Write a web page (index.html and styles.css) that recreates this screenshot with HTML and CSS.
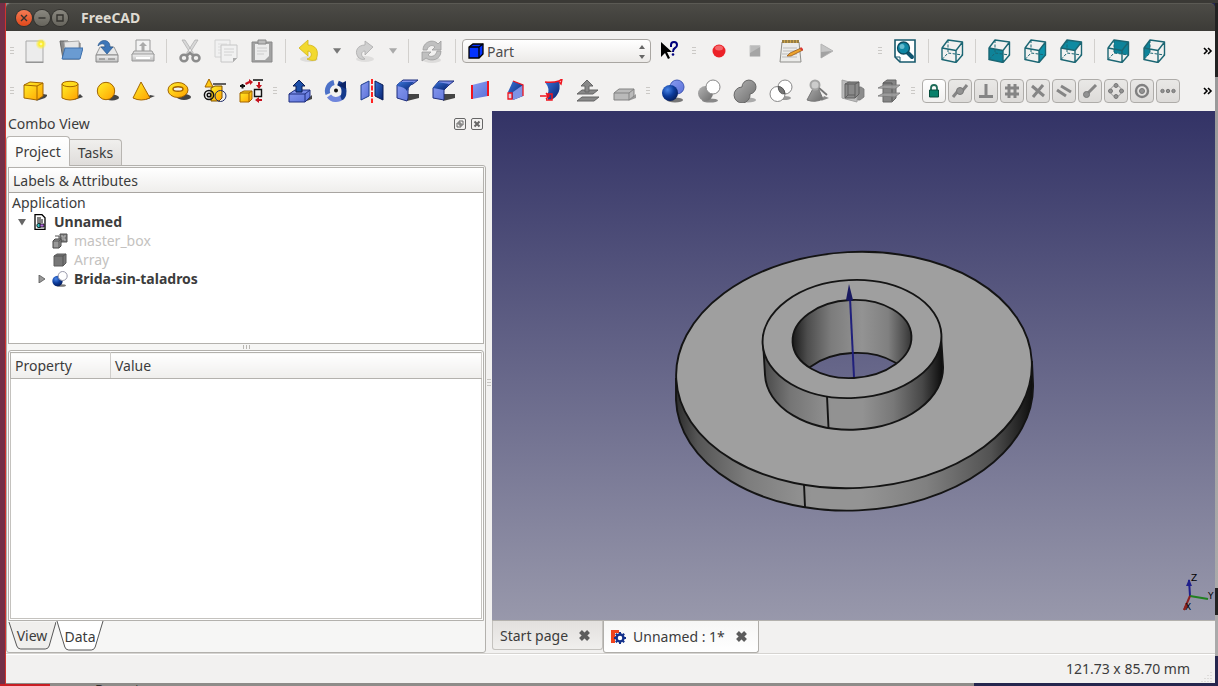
FILE: index.html
```
<!DOCTYPE html>
<html lang="en">
<head>
<meta charset="utf-8">
<title>FreeCAD</title>
<link rel="stylesheet" href="styles.css">
</head>
<body>
<svg class="defs" aria-hidden="true">
  <defs>
    <linearGradient id="gold" x1="0" y1="0" x2="1" y2="1"><stop offset="0" stop-color="#fff02a"/><stop offset="1" stop-color="#ffa000"/></linearGradient>
    <linearGradient id="blue" x1="0" y1="0" x2="1" y2="1"><stop offset="0" stop-color="#8a9cf0"/><stop offset="1" stop-color="#5a70d8"/></linearGradient>
    <linearGradient id="navy" x1="0" y1="0" x2="1" y2="1"><stop offset="0" stop-color="#3a74d8"/><stop offset="1" stop-color="#06206e"/></linearGradient>
    <linearGradient id="grey" x1="0" y1="0" x2="1" y2="1"><stop offset="0" stop-color="#b4b4b4"/><stop offset="1" stop-color="#6c6c6c"/></linearGradient>
    <linearGradient id="pale" x1="0" y1="0" x2="0" y2="1"><stop offset="0" stop-color="#f4f4f4"/><stop offset="1" stop-color="#bdbdbd"/></linearGradient>
    <radialGradient id="ball" cx=".35" cy=".3" r=".8"><stop offset="0" stop-color="#4a86e8"/><stop offset=".5" stop-color="#0c3c9c"/><stop offset="1" stop-color="#041850"/></radialGradient>
    <radialGradient id="shine"><stop offset="0" stop-color="#fffde0"/><stop offset=".35" stop-color="#ffee20"/><stop offset="1" stop-color="#ffee20" stop-opacity="0"/></radialGradient>
  </defs>
  <symbol id="wire" viewBox="0 0 24 24">
    <g fill="none" stroke="#1b6673" stroke-width="1.4" stroke-linejoin="round">
      <path d="M2 9L16 11.5V23.5L2 20.5ZM2 9L8 1L22.5 3L16 11.5M22.5 3V16L16 23.5"/>
      <path d="M8 1V14M2 20.5L8 14L22.5 16" stroke-width="1" stroke-dasharray="3 1.5"/>
    </g>
  </symbol>
</svg>

<header class="titlebar">
  <button class="wm wm-close" aria-label="Close"><svg viewBox="0 0 16 16"><path d="M5 5l6 6M11 5l-6 6"/></svg></button>
  <button class="wm" aria-label="Minimize"><svg viewBox="0 0 16 16"><path d="M4.500 8h7"/></svg></button>
  <button class="wm" aria-label="Maximize"><svg viewBox="0 0 16 16"><path d="M5 5h6v6H5z"/></svg></button>
  <h1>FreeCAD</h1>
</header>

<nav class="toolbar" aria-label="File and view">
  <span class="grip"></span>
  <button class="tool" aria-label="New"><svg viewBox="0 0 24 24"><path d="M3 2h17v21H3z" fill="#ececec" stroke="#a9a9a9"/><path d="M2.500 23.300h18" stroke="#888"/><circle cx="18" cy="5" r="5.500" fill="url(#shine)"/></svg></button>
  <button class="tool" aria-label="Open"><svg viewBox="0 0 24 24"><path d="M1 2h8l1 2h11v5L20 20H4z" fill="#8a8a8a" stroke="#666"/><path d="M5 3l15-1v8H6z" fill="#e6e6e6" stroke="#aaa"/><path d="M6 9h18l-3 11H3z" fill="#6a9bd2" stroke="#3e70ac"/></svg></button>
  <button class="tool" aria-label="Save"><svg viewBox="0 0 24 24"><path d="M5 8h14l4 8H1z" fill="#e8e8e8" stroke="#999"/><path d="M1 16h22v7H1z" fill="url(#pale)" stroke="#888"/><path d="M13 20h7M4 20h6" stroke="#777"/><path d="M3 7C4 0 15-1 15 8h3l-6 7-6-7h4C10 4 6 4 3 7z" fill="#3d76b8" stroke="#28568c" stroke-width=".7"/></svg></button>
  <button class="tool" aria-label="Print"><svg viewBox="0 0 24 24"><path d="M5 1h14v12H5z" fill="#f3f3f3" stroke="#999"/><path d="M12 3l4 4h-2.500v5h-3V7H8z" fill="#aaa"/><path d="M3 12h18l2 4H1z" fill="#ddd" stroke="#999"/><path d="M1 15h22v7H1z" fill="url(#pale)" stroke="#999"/><path d="M5 19h14" stroke="#fff" stroke-width="2"/></svg></button>
  <span class="sep"></span>
  <button class="tool" aria-label="Cut"><svg viewBox="0 0 24 24"><path d="M4 1l3 0 9 14-2 2zM20 1h-3L8 15l2 2z" fill="#d8d8d8" stroke="#aaa" stroke-width=".7"/><g fill="none" stroke="#8c8c8c" stroke-width="2.500"><ellipse cx="6" cy="19" rx="3.500" ry="3.200"/><ellipse cx="18" cy="19" rx="3.500" ry="3.200"/><path d="M8 17l4-3 4 3"/></g></svg></button>
  <button class="tool" aria-label="Copy"><svg viewBox="0 0 24 24"><path d="M1 1h15v17H1z" fill="#f1f1f1" stroke="#d2d2d2"/><path d="M4 5h9M4 8h9M4 11h9M4 14h9" stroke="#ddd"/><path d="M7 6h16v13l-4 4H7z" fill="#f1f1f1" stroke="#c6c6c6"/><path d="M10 10h10M10 13h10M10 16h8" stroke="#d2d2d2"/><path d="M19 23v-4h4z" fill="#aaa"/></svg></button>
  <button class="tool" aria-label="Paste"><svg viewBox="0 0 24 24"><path d="M2 3h20v20H2z" fill="#a2a2a2" stroke="#8a8a8a"/><path d="M5 5h14v12l-4 4H5z" fill="#ececec"/><path d="M8 1h8v4H8z" fill="#bbb" stroke="#888"/><path d="M7 9h10M7 12h10M7 15h7" stroke="#ccc"/></svg></button>
  <span class="sep"></span>
  <button class="tool" aria-label="Undo"><svg viewBox="0 0 24 24"><ellipse cx="12" cy="20" rx="9" ry="3" fill="#dedddc"/><path d="M2 9l9-8v5c7 0 12 5 8 15-4 1-7 0-9-1 5-1 6-7 1-8v5z" fill="#f2d92e" stroke="#d0b416" stroke-width=".8"/></svg></button>
  <button class="drop" aria-label="Undo history"><svg viewBox="0 0 10 6"><path d="M0 0h9L4.500 6z" fill="#777"/></svg></button>
  <button class="tool" aria-label="Redo"><svg viewBox="0 0 24 24"><ellipse cx="12" cy="20" rx="9" ry="3" fill="#dfdedd"/><path d="M20 8l-8-6v4C5 6 1 12 5 18c2 2 4 3 7 2-5-3-4-8 0-8v4z" fill="#cfcfcf" stroke="#ababab" stroke-width=".8"/></svg></button>
  <button class="drop" aria-label="Redo history"><svg viewBox="0 0 10 6"><path d="M0 0h9L4.500 6z" fill="#aaa"/></svg></button>
  <span class="sep"></span>
  <button class="tool" aria-label="Refresh"><svg viewBox="0 0 24 24"><ellipse cx="12" cy="21" rx="9" ry="3" fill="#dddcdb"/><path d="M3 11C3 3 13-1 18 5l3-3v9h-9l3-3c-3-3-7-1-8 3zM21 12c0 9-10 11-15 7l-4 3v-9h9l-3 3c3 3 8 1 9-4z" fill="#c0c0c0" stroke="#9d9d9d" stroke-width=".8"/></svg></button>
  <span class="sep"></span>
  <span class="workbench">
    <svg class="wb-icon" viewBox="0 0 16 16"><path d="M1 4l4-3h10v10l-4 4H1z" fill="#0433ff" stroke="#000" stroke-width="1.300"/><path d="M1 4h10v11M11 4l4-3" fill="none" stroke="#000" stroke-width="1.300"/></svg>
    <select aria-label="Workbench"><option>Part</option></select>
    <svg class="wb-arrows" viewBox="0 0 8 14"><path d="M1 4l3-4 3 4zM1 10h6l-3 4z" fill="#666"/></svg>
  </span>
  <button class="tool" aria-label="What's this"><svg viewBox="0 0 24 24"><path d="M3 3v15l4-4 3 6 2-1-3-6h5z" fill="#000"/><path d="M13 8V6q0-3 3-3t3 3q0 2-2 3t-2 4" fill="none" stroke="#00007c" stroke-width="2"/><circle cx="15" cy="15.500" r="1.300" fill="#00007c"/></svg></button>
  <span class="grip"></span>
  <button class="tool" aria-label="Record macro"><svg viewBox="0 0 24 24"><circle cx="12" cy="12" r="6.500" fill="#ec2228"/><ellipse cx="12" cy="9" rx="4" ry="2.500" fill="#f4666a"/></svg></button>
  <button class="tool" aria-label="Stop macro"><svg viewBox="0 0 24 24"><path d="M7 6.500h10v11H7z" fill="#bbb" stroke="#c9c9c9"/><path d="M7 14l10-6v9H7z" fill="#a5a5a5"/></svg></button>
  <button class="tool" aria-label="Macros"><svg viewBox="0 0 24 24"><path d="M3 3h17l2 20H1z" fill="#ececea" stroke="#8f8f8b"/><path d="M3 1h17v3H3z" fill="#c9a24a"/><path d="M4 1v3M7 1v3M10 1v3M13 1v3M16 1v3M19 1v3" stroke="#66583a"/><path d="M4 9h14M4 12h14M3 15h15M3 18h15" stroke="#bbb"/><path d="M8 17l3-3 11-5 2 2-12 6z" fill="#eda32c" stroke="#8a4e14" stroke-width=".7"/><path d="M22 8l2 2-1 2-2-2z" fill="#d33"/></svg></button>
  <button class="tool" aria-label="Run macro"><svg viewBox="0 0 24 24"><path d="M6 5l12 7-12 7z" fill="#c6c6c6" stroke="#b4b4b4"/><path d="M6 13l11-1-11 7z" fill="#a2a2a2"/></svg></button>
  <span class="stretch"></span>
  <span class="grip"></span>
  <button class="tool" aria-label="Fit all"><svg viewBox="0 0 24 24"><path d="M2 1h20v22H7l-5-5z" fill="#fff" stroke="#17596c" stroke-width="1.600"/><path d="M2 18h5v5" fill="none" stroke="#17596c"/><path d="M14 13l5 5" stroke="#0e5570" stroke-width="4" stroke-linecap="round"/><circle cx="10.500" cy="9" r="6" fill="#0f87a5" stroke="#0c4c60" stroke-width="1.300"/><circle cx="9" cy="7.500" r="2.500" fill="#65bccf"/></svg></button>
  <span class="sep"></span>
  <button class="tool" aria-label="Axonometric"><svg viewBox="0 0 24 24"><use href="#wire"/></svg></button>
  <span class="sep"></span>
  <button class="tool" aria-label="Front"><svg viewBox="0 0 24 24"><path d="M2 9l14 2.500v12l-14-3z" fill="#0e8399"/><use href="#wire"/></svg></button>
  <button class="tool" aria-label="Right"><svg viewBox="0 0 24 24"><path d="M16 11.500L22.500 3v13L16 23.500z" fill="#0e93ab"/><use href="#wire"/></svg></button>
  <button class="tool" aria-label="Top"><svg viewBox="0 0 24 24"><path d="M2 9l6-8 14.500 2L16 11.500z" fill="#0e8ba2"/><use href="#wire"/></svg></button>
  <span class="sep"></span>
  <button class="tool" aria-label="Rear"><svg viewBox="0 0 24 24"><path d="M8 1l14.500 2v13L8 14z" fill="#0e839a"/><use href="#wire"/></svg></button>
  <button class="tool" aria-label="Left"><svg viewBox="0 0 24 24"><path d="M2 9l6-8v13l-6 6.500z" fill="#0e839a"/><use href="#wire"/></svg></button>
  <button class="more" aria-label="More tools"><svg viewBox="0 0 10 8"><path d="M1 1l3 3-3 3M5 1l3 3-3 3"/></svg></button>
</nav>

<nav class="toolbar" aria-label="Part tools">
  <span class="grip"></span>
  <button class="tool" aria-label="Box"><svg viewBox="0 0 24 24"><path d="M13 22l9-3 3-3-5-1z" fill="#444"/><path d="M1 6l6-3 13 1v13l-6 4-13-2z" fill="url(#gold)" stroke="#a36400"/><path d="M1 6l13 1 6-3M14 7v14" fill="none" stroke="#a36400"/></svg></button>
  <button class="tool" aria-label="Cylinder"><svg viewBox="0 0 24 24"><path d="M15 21l9-3-3-3z" fill="#444"/><path d="M3 5v14q8 4 16 0V5" fill="url(#gold)" stroke="#a36400"/><ellipse cx="11" cy="5" rx="8" ry="2.700" fill="#ffdb1c" stroke="#a36400"/></svg></button>
  <button class="tool" aria-label="Sphere"><svg viewBox="0 0 24 24"><ellipse cx="17" cy="18.500" rx="7" ry="3" fill="#444"/><circle cx="11" cy="12" r="8.700" fill="url(#gold)" stroke="#a36400"/></svg></button>
  <button class="tool" aria-label="Cone"><svg viewBox="0 0 24 24"><path d="M14 21l10-4-5-1z" fill="#444"/><path d="M10 3l9 16q-9 4-17 0z" fill="url(#gold)" stroke="#a36400"/></svg></button>
  <button class="tool" aria-label="Torus"><svg viewBox="0 0 24 24"><ellipse cx="17" cy="18" rx="7" ry="3" fill="#444"/><ellipse cx="11" cy="11" rx="10" ry="7.500" fill="url(#gold)" stroke="#a36400"/><ellipse cx="11" cy="10" rx="5" ry="2.300" fill="#f2f1f0" stroke="#a36400" stroke-width="1.500"/></svg></button>
  <button class="tool" aria-label="Create primitives"><svg viewBox="0 0 24 24"><path d="M6 0l4 8H2z" fill="#ffc814" stroke="#a36400"/><path d="M10 5h13" stroke="#111" stroke-width="1.300"/><path d="M8 9l4-2h7v12l-3 3H8z" fill="url(#gold)" stroke="#7d5200"/><g fill="none" stroke="#111" stroke-width="1.500"><circle cx="6" cy="16" r="4.600"/><circle cx="6" cy="16" r="1.800"/></g><circle cx="17.500" cy="17" r="5.500" fill="none" stroke="#1e2b66"/></svg></button>
  <button class="tool" aria-label="Shape builder"><svg viewBox="0 0 24 24"><path d="M1 14l4-2h8v8l-3 3H1z" fill="url(#gold)" stroke="#a36400"/><path d="M1 14h9v9M10 14l3-2" fill="none" stroke="#a36400"/><path d="M14 1h10M15.500 10.500h7v7h-7z" fill="none" stroke="#111" stroke-width="1.400"/><path d="M1 7h5M3.500 5v4.500" stroke="#111" stroke-width="2"/><path d="M6 4l4-2V0l4 3-3 3V4L7 6zM19 3h2v3h2l-3 4-3-4h2zM23 20h-3v-2l-4 3 4 3v-2l3 0z" fill="#c5121f"/></svg></button>
  <span class="grip"></span>
  <button class="tool" aria-label="Extrude"><svg viewBox="0 0 24 24"><path d="M16 23l8-3v-4z" fill="#444"/><path d="M1 15l6-4h15v7l-5 5H1z" fill="url(#blue)" stroke="#1f2f7e"/><path d="M1 15h16v8M17 15l5-4" fill="none" stroke="#1f2f7e"/><path d="M11 1l6 6h-3v6H8V7H5z" fill="#1d4fa8" stroke="#0b1d55"/></svg></button>
  <button class="tool" aria-label="Revolve"><svg viewBox="0 0 24 24"><g fill="none" stroke-width="5"><path d="M10 3.500A8.500 8.500 0 0 0 4 15" stroke="#4d72c8"/><path d="M5 17a8.500 8.500 0 0 0 13 1" stroke="#7086dc"/><path d="M14 4q6 2 6 8t-3 7" stroke="#153a8c"/></g><path d="M14 6l8-4v8z" fill="#0b2468"/><circle cx="12" cy="11.500" r="2" fill="#111"/></svg></button>
  <button class="tool" aria-label="Mirror"><svg viewBox="0 0 24 24"><path d="M1 6l8-4v15l-8 4z" fill="url(#blue)" stroke="#1f3f8e"/><path d="M15 2l8 4v15l-8-4z" fill="url(#navy)" stroke="#0b1d55"/><path d="M12 0v24" stroke="#f22" stroke-width="2" stroke-dasharray="5 1.500"/></svg></button>
  <button class="tool" aria-label="Fillet"><svg viewBox="0 0 24 24"><path d="M11 22l12-3v-4H12z" fill="#444"/><path d="M1 6l6-5h15l-5 4q-5 1-5 7v7l-1 3-10-3z" fill="url(#blue)" stroke="#1f2f7e"/><path d="M1 6l3-3h14l-4 4q-2 1-3 5-2-4-10-5z" fill="url(#navy)"/></svg></button>
  <button class="tool" aria-label="Chamfer"><svg viewBox="0 0 24 24"><path d="M11 22l12-3v-4H12z" fill="#444"/><path d="M1 9l6-7h15l-5 4-5 5v10l-11-2z" fill="url(#blue)" stroke="#1f2f7e"/><path d="M1 9l5-6 11 2-5 6z" fill="url(#navy)"/></svg></button>
  <button class="tool" aria-label="Ruled surface"><svg viewBox="0 0 24 24"><path d="M4 6l16-4v15L4 20z" fill="url(#blue)"/><path d="M4 6v14M20 2v15" stroke="#f0141e" stroke-width="2"/></svg></button>
  <button class="tool" aria-label="Loft"><svg viewBox="0 0 24 24"><path d="M4 13L9 2l10 4v11l-10 4z" fill="url(#navy)"/><path d="M9 13l10-7v11l-10 4z" fill="#7f92e4"/><path d="M9 2l10 4v11" fill="none" stroke="#e81420" stroke-width="1.300"/><path d="M4 14h4v6H4z" fill="#dcd" stroke="#f0141e" stroke-width="1.300"/></svg></button>
  <button class="tool" aria-label="Sweep"><svg viewBox="0 0 24 24"><path d="M5 3q8 1 14-1 2 9-2 14-3 5-9 5l-1-5Q11 11 5 3z" fill="url(#navy)"/><path d="M5 3q8 1 14-1l3-2-1 5-2-2M6 15h6v6H6M0 17h9M6 14l3 3-3 3" fill="none" stroke="#f0141e" stroke-width="1.500"/></svg></button>
  <button class="tool" aria-label="Offset"><svg viewBox="0 0 24 24"><path d="M1 22l5-4h17l-5 4zM1 15l5-4h16l-5 4z" fill="#888" stroke="#666"/><path d="M11 1l6 6h-4v6H9V7H5z" fill="#888" stroke="#666"/></svg></button>
  <button class="tool" aria-label="Thickness"><svg viewBox="0 0 24 24"><path d="M16 22l8-3v-4z" fill="#999"/><path d="M2 14l5-4h15v7l-5 4H2z" fill="#bababa" stroke="#838383"/><path d="M2 14h15v7M17 14l5-4" fill="none" stroke="#838383"/></svg></button>
  <span class="grip"></span>
  <button class="tool" aria-label="Boolean"><svg viewBox="0 0 24 24"><ellipse cx="14" cy="21" rx="8" ry="2.500" fill="#777"/><circle cx="16" cy="8" r="7" fill="url(#blue)" stroke="#3f57b4"/><circle cx="9" cy="14" r="8" fill="url(#ball)"/></svg></button>
  <button class="tool" aria-label="Cut shapes"><svg viewBox="0 0 24 24"><ellipse cx="13" cy="21.500" rx="8" ry="2" fill="#888"/><circle cx="8.500" cy="14.500" r="7.500" fill="url(#grey)"/><circle cx="16" cy="8" r="7" fill="#fff" stroke="#888"/></svg></button>
  <button class="tool" aria-label="Union"><svg viewBox="0 0 24 24"><ellipse cx="15" cy="21" rx="8" ry="2.500" fill="#aaa"/><path d="M9 8a7 7 0 1 1 8 7 8 8 0 1 1-8-7z" fill="url(#grey)" stroke="#666"/></svg></button>
  <button class="tool" aria-label="Intersection"><svg viewBox="0 0 24 24"><ellipse cx="15" cy="19" rx="7" ry="2" fill="#999"/><circle cx="16" cy="8" r="7" fill="#fff" stroke="#888"/><circle cx="8.500" cy="15" r="7.500" fill="#fff" stroke="#888"/><path d="M9 7.600q6 0 7 7.200-6 1-7-7.200z" fill="#777" stroke="#555"/></svg></button>
  <button class="tool" aria-label="Check geometry"><svg viewBox="0 0 24 24"><path d="M16 22l8-3-5-2z" fill="#888"/><path d="M11 4l7 16q-8 4-16 1z" fill="url(#grey)" stroke="#777"/><circle cx="10" cy="6" r="4.500" fill="#ccc" stroke="#a5a5a5" stroke-width="2"/><path d="M14 9l8 7" stroke="#777" stroke-width="1.800"/></svg></button>
  <button class="tool" aria-label="Section"><svg viewBox="0 0 24 24"><path d="M12 8h8l3 2v8l-4 3h-7z" fill="#8c8c8c" stroke="#777" stroke-width=".8"/><path d="M1 1l15 4v18L1 19z" fill="#bcbcbc" stroke="#a2a2a2"/><path d="M4 5l4-2h10v12l-4 4H4z" fill="#8a8a8a" stroke="#5e5e5e"/><path d="M4 5h10v14M14 5l4-2M7 5v11h7M4 19l3-3" fill="none" stroke="#5e5e5e"/></svg></button>
  <button class="tool" aria-label="Cross-sections"><svg viewBox="0 0 24 24"><path d="M6 4l4-3h9v18l-4 4H6z" fill="#848484" stroke="#666"/><path d="M6 4h9v18" fill="none" stroke="#555"/><path d="M1 9l6-3h16l-5 4zM1 17l6-3h16l-5 4z" fill="#a2a2a2" fill-opacity=".8" stroke="#777" stroke-width=".8"/></svg></button>
  <span class="grip"></span>
  <span class="snaps">
    <button class="snap on" aria-label="Snap lock"><svg viewBox="0 0 18 18"><path d="M6 8V6q0-3 3-3t3 3v2" fill="none" stroke="#1d6b58" stroke-width="1.800"/><path d="M4.500 8h9v7h-9z" fill="#08806a" stroke="#064c3c"/></svg></button>
    <button class="snap" aria-label="Snap near"><svg viewBox="0 0 18 18"><path d="M2 15l4-5 6-2 4-5" class="bar"/><circle cx="9" cy="9" r="3.500" class="dot"/></svg></button>
    <button class="snap" aria-label="Snap perpendicular"><svg viewBox="0 0 18 18"><path d="M9 2v12M2 14.500h14" class="bar"/></svg></button>
    <button class="snap" aria-label="Snap grid"><svg viewBox="0 0 18 18"><path d="M6 2v14M12 2v14M2 6h14M2 12h14" class="bar"/></svg></button>
    <button class="snap" aria-label="Snap intersection"><svg viewBox="0 0 18 18"><path d="M3 4l12 10M14 3L4 15" class="bar"/></svg></button>
    <button class="snap" aria-label="Snap parallel"><svg viewBox="0 0 18 18"><path d="M2 8l9 6M6 4l10 6" class="bar"/></svg></button>
    <button class="snap" aria-label="Snap endpoint"><svg viewBox="0 0 18 18"><path d="M6 12l9-9" class="bar"/><circle cx="5.500" cy="12.500" r="3" class="dot"/></svg></button>
    <button class="snap" aria-label="Snap angle"><svg viewBox="0 0 18 18"><circle cx="9" cy="9" r="5.500" fill="none" stroke="#999"/><g class="dot"><circle cx="9" cy="3.500" r="2"/><circle cx="14.500" cy="9" r="2"/><circle cx="9" cy="14.500" r="2"/><circle cx="3.500" cy="9" r="2"/></g></svg></button>
    <button class="snap" aria-label="Snap center"><svg viewBox="0 0 18 18"><circle cx="9" cy="9" r="6" fill="none" stroke="#808080" stroke-width="2.400"/><circle cx="9" cy="9" r="2.500" class="dot"/></svg></button>
    <button class="snap" aria-label="Snap extension"><svg viewBox="0 0 18 18"><g class="dot"><circle cx="3.500" cy="9" r="1.700"/><circle cx="9" cy="9" r="1.700"/><circle cx="14.500" cy="9" r="1.700"/></g></svg></button>
  </span>
  <button class="more" aria-label="More tools"><svg viewBox="0 0 10 8"><path d="M1 1l3 3-3 3M5 1l3 3-3 3"/></svg></button>
</nav>

<main class="workspace">
  <aside class="dock">
    <div class="dock-title">
      <h2>Combo View</h2>
      <button class="dock-btn" aria-label="Float"><svg viewBox="0 0 12 12"><rect x=".5" y=".5" width="11" height="11" rx="1.500"/><path d="M5 3h4v4H5zM3 5h4v4H3z"/></svg></button>
      <button class="dock-btn" aria-label="Close panel"><svg viewBox="0 0 12 12"><rect x=".5" y=".5" width="11" height="11" rx="1.500"/><path d="M3.500 3.500l5 5M8.500 3.500l-5 5" stroke-width="2"/></svg></button>
    </div>
    <div class="tabs">
      <button class="tab active">Project</button>
      <button class="tab">Tasks</button>
    </div>
    <div class="pane">
      <section class="tree">
        <h3 class="col-head">Labels &amp; Attributes</h3>
        <ul>
          <li class="lv0">Application</li>
          <li class="lv1"><svg class="twist" viewBox="0 0 8 8"><path d="M0 1h8L4 7.500z"/></svg><svg class="ti" viewBox="0 0 16 16"><path d="M3 .7h7l3 3v11.600H3z" fill="#fff" stroke="#000" stroke-width="1.300"/><path d="M5 4h4M5 6h6M5 8h6" stroke="#000"/><circle cx="7" cy="11.500" r="2.200" fill="#35bdc4" stroke="#000" stroke-width=".8"/><path d="M8 10h4v3H8z" fill="#b46be0" stroke="#000" stroke-width=".8"/></svg><b>Unnamed</b></li>
          <li class="lv2 off"><span class="twist"></span><svg class="ti" viewBox="0 0 16 16"><path d="M8 1h7v8H8z" fill="#777" stroke="#555"/><path d="M10 2v2h3V2M10 6h3v2" stroke="#bbb" fill="none"/><path d="M1 8l2-2h6v7l-2 2H1z" fill="#999" stroke="#444"/><path d="M1 8h6v7M7 8l2-2M3 3h4v3" fill="none" stroke="#555"/></svg>master_box</li>
          <li class="lv2 off"><span class="twist"></span><svg class="ti" viewBox="0 0 16 16"><path d="M2 4l3-2h9v9l-3 3H2z" fill="#777" stroke="#5c5c5c"/><path d="M2 4h9v10M11 4l3-2" fill="none" stroke="#555"/></svg>Array</li>
          <li class="lv2"><svg class="twist" viewBox="0 0 8 8"><path d="M1 0l6 4-6 4z" fill="#999" stroke="#555" stroke-width=".8"/></svg><svg class="ti" viewBox="0 0 16 16"><ellipse cx="9" cy="14.500" rx="5" ry="1.300" fill="#777"/><circle cx="5.500" cy="10" r="5.200" fill="url(#ball)"/><circle cx="10.700" cy="5" r="4.500" fill="#fff" stroke="#99a"/></svg><b>Brida-sin-taladros</b></li>
        </ul>
      </section>
      <div class="splitter"><i></i><i></i><i></i></div>
      <section class="props">
        <table>
          <thead><tr><th>Property</th><th>Value</th></tr></thead>
        </table>
      </section>
      <div class="btabs">
        <button class="btab"><svg viewBox="0 0 49 29" preserveAspectRatio="none"><path d="M1 1l8 24q1 3 4 3h25q3 0 4-3l7-24" fill="#f0efed"/></svg><span>View</span></button>
        <button class="btab active"><svg viewBox="0 0 49 30" preserveAspectRatio="none"><path d="M1 0l8 26q1 3 4 3h23q3 0 4-3l8-26" fill="#fff"/></svg><span>Data</span></button>
      </div>
    </div>
  </aside>
  <div class="handle"><i></i><i></i><i></i></div>
  <section class="mdi">
    <div class="viewport">
      <svg class="scene" viewBox="492 111 723 509" role="img" aria-label="Flange model">
        <defs>
          <linearGradient id="rim" gradientUnits="userSpaceOnUse" x1="676" y1="0" x2="1034" y2="0"><stop offset="0" stop-color="#2c2c2c"/><stop offset=".06" stop-color="#555"/><stop offset=".2" stop-color="#7d7d7d"/><stop offset=".38" stop-color="#949494"/><stop offset=".52" stop-color="#949494"/><stop offset=".7" stop-color="#808080"/><stop offset=".88" stop-color="#525252"/><stop offset="1" stop-color="#0c0c0c"/></linearGradient>
          <linearGradient id="hub" gradientUnits="userSpaceOnUse" x1="763" y1="0" x2="944" y2="0"><stop offset="0" stop-color="#484848"/><stop offset=".15" stop-color="#757575"/><stop offset=".38" stop-color="#929292"/><stop offset=".55" stop-color="#929292"/><stop offset=".72" stop-color="#787878"/><stop offset=".88" stop-color="#484848"/><stop offset="1" stop-color="#080808"/></linearGradient>
          <linearGradient id="bore" gradientUnits="userSpaceOnUse" x1="793" y1="0" x2="912" y2="0"><stop offset="0" stop-color="#1c1c1c"/><stop offset=".12" stop-color="#4d4d4d"/><stop offset=".32" stop-color="#7c7c7c"/><stop offset=".58" stop-color="#939393"/><stop offset=".8" stop-color="#808080"/><stop offset=".93" stop-color="#505050"/><stop offset="1" stop-color="#333"/></linearGradient>
          <linearGradient id="sky" gradientUnits="userSpaceOnUse" x1="0" y1="111" x2="0" y2="620"><stop offset="0" stop-color="#333366"/><stop offset="1" stop-color="#9898ab"/></linearGradient>
          <clipPath id="hole"><ellipse cx="852" cy="339" rx="59.500" ry="39" transform="rotate(-3 852 339)"/></clipPath>
        </defs>
        <g stroke="#141414" stroke-width="1.900">
          <path d="M676 379V400A178 118 -3 0 0 1033 384L1032 362Z" fill="url(#rim)"/>
          <ellipse cx="854" cy="370" rx="178" ry="118" transform="rotate(-3 854 370)" fill="#9f9f9f"/>
          <path d="M763 341L765 375A89 59 -3 0 0 943 366L941 335Z" fill="url(#hub)"/>
          <ellipse cx="852" cy="339" rx="89.500" ry="59" transform="rotate(-3 852 339)" fill="#9f9f9f"/>
          <g clip-path="url(#hole)">
            <path d="M790 295h125v90H790z" fill="url(#bore)" stroke="none"/>
            <ellipse cx="854" cy="392" rx="59.500" ry="39" transform="rotate(-3 854 392)" fill="url(#sky)"/>
          </g>
          <ellipse cx="852" cy="339" rx="59.500" ry="39" transform="rotate(-3 852 339)" fill="none"/>
          <path d="M827 396L828.500 428M804 484L805 507" fill="none"/>
        </g>
        <path d="M854 377L850 298" stroke="#20207c" stroke-width="2"/>
        <path d="M849 284l4 16q-3 2-7 0z" fill="#191960"/>
      </svg>
      <svg class="axes" viewBox="0 0 36 44" aria-hidden="true">
        <path d="M11 24L10 8" stroke="#20208c" stroke-width="2"/><path d="M10 7l3 7H7z" fill="#20208c"/>
        <path d="M11 24l18 3" stroke="#208020" stroke-width="2"/>
        <path d="M11 24L5 38" stroke="#8c2020" stroke-width="2"/><path d="M7 31l-3 7 5-3z" fill="#8c2020"/>
        <text x="12" y="9">Z</text><text x="29" y="27">Y</text><text x="6" y="38">X</text>
      </svg>
    </div>
    <div class="mtabs">
      <button class="mtab">Start page <svg class="x" viewBox="0 0 13 13"><path d="M2.500 2.500l8 8M10.500 2.500l-8 8"/></svg></button>
      <button class="mtab active"><svg class="logo" viewBox="0 0 16 16"><path d="M1 1h8v3H5v3h3v3H5v4H1z" fill="#f0431c"/><circle cx="10" cy="9" r="3.500" fill="#fff" stroke="#14328c" stroke-width="2.500"/><path d="M10 3v2M10 13v2M4 9h2M14 9h2M5.800 4.800l1.500 1.500M12.700 11.700l1.500 1.500M14.200 4.800l-1.500 1.500M7.300 11.700l-1.500 1.500" stroke="#14328c" stroke-width="2"/></svg>Unnamed : 1* <svg class="x" viewBox="0 0 13 13"><path d="M2.500 2.500l8 8M10.500 2.500l-8 8"/></svg></button>
    </div>
  </section>
</main>

<footer class="status">121.73 x 85.70 mm<svg class="sizer" viewBox="0 0 12 12" aria-hidden="true"><path d="M10 1v11M7 4v8M4 7v5M1 10v2"/></svg></footer>
<div class="behind">Recent</div>
</body>
</html>
```
FILE: styles.css
```
* { box-sizing: border-box; }
body {
  margin: 0;
  padding: 3px 3px 0 6px;
  height: 100vh;
  overflow: hidden;
  display: flex;
  flex-direction: column;
  font: 14px/19px "Noto Sans", "Open Sans", sans-serif;
  color: #3c3c3c;
  background:
    linear-gradient(#3a3935, #3a3935) 0 0 / 100% 3px no-repeat,
    linear-gradient(#c81e23, #c81e23) 0 100% / 50px 2px no-repeat,
    linear-gradient(#d0342f, #d0342f) 5px 0 / 1px 100% no-repeat,
    linear-gradient(#742f47, #742f47) 0 0 / 5px 100% no-repeat,
    linear-gradient(#222 77px, #999 77px, #aaa 588px, #222 588px, #222 615px, #aaa 615px, #aaa 656px, #25264e 656px) 100% 0 / 3px 100% no-repeat,
    linear-gradient(90deg, #8e8c89 0 80%, #25264e 80%);
}
h1, h2, h3, ul { margin: 0; padding: 0; font: inherit; list-style: none; }
button { border: 0; padding: 0; margin: 0; background: none; font: inherit; color: inherit; }
svg { display: block; flex: none; }
.defs { position: absolute; width: 0; height: 0; }

.titlebar {
  flex: none;
  height: 28px;
  display: flex;
  align-items: center;
  gap: 2px;
  padding-left: 10px;
  border-top: 1px solid #5b5a54;
  border-radius: 5px 5px 0 0;
  background: linear-gradient(#4c4b46, #3c3b37);
}
.titlebar h1 { margin-left: 11px; font-size: 14px; font-weight: bold; color: #dfdbd2; }
.wm { width: 16px; height: 16px; border-radius: 50%; background: linear-gradient(#8a8880, #66645c); box-shadow: 0 0 0 1px #33322e; }
.wm-close { background: linear-gradient(#f47b55, #e0481a); }
.wm svg { width: 16px; height: 16px; fill: none; stroke: #33322e; stroke-width: 1.4; }

.toolbar { flex: none; height: 40px; display: flex; align-items: center; background: #f2f1f0; }
.grip {
  flex: none;
  width: 13px;
  height: 8px;
  background: repeating-linear-gradient(#cbc9c6 0 1px, transparent 1px 3px) 4px 0 / 4px 8px no-repeat;
}
.grip:first-child { width: 11px; }
.sep { flex: none; width: 11px; height: 24px; background: linear-gradient(#d2d0cd, #d2d0cd) 5px 0 / 1px 100% no-repeat; }
.tool { flex: none; width: 36px; height: 36px; display: grid; place-items: center; }
.tool svg { width: 24px; height: 24px; }
.drop { flex: none; width: 20px; height: 36px; display: grid; place-items: center; }
.drop svg { width: 9px; height: 6px; }
.stretch { flex: 0 1 29px; }
.more { margin-left: auto; width: 14px; height: 36px; display: grid; place-items: center; }
.more svg { width: 10px; height: 8px; fill: none; stroke: #000; stroke-width: 1.6; }
.workbench { position: relative; flex: none; width: 189px; height: 24px; margin: 0 1px; }
.workbench select {
  appearance: none;
  width: 100%;
  height: 24px;
  padding: 0 24px;
  border: 1px solid #a9a6a2;
  border-radius: 4px;
  background: linear-gradient(#fff, #eceae8);
  font: inherit;
  color: #4c4c4c;
}
.wb-icon { position: absolute; left: 6px; top: 4px; width: 16px; height: 16px; }
.wb-arrows { position: absolute; right: 5px; top: 6px; width: 8px; height: 14px; }
.snaps { display: flex; gap: 2px; padding-left: 2px; }
.snap {
  width: 24px;
  height: 24px;
  display: grid;
  place-items: center;
  border: 1px solid #aeaca9;
  border-radius: 4px;
  background: linear-gradient(#e9e8e6, #dddbd9);
}
.snap.on { background: linear-gradient(#fff, #f0efee); }
.snap svg { width: 18px; height: 18px; }
.snap .bar { fill: none; stroke: #858585; stroke-width: 3; }
.snap .dot { fill: #929292; stroke: #777; stroke-width: 1; }

.workspace { flex: 1; min-height: 0; display: flex; background: #f2f1f0; }
.dock { flex: 0 0 480px; display: flex; flex-direction: column; }
.dock-title { height: 25px; display: flex; align-items: center; gap: 5px; padding: 0 3px 0 2px; }
.dock-title h2 { flex: 1; }
.dock-btn svg { width: 12px; height: 12px; fill: none; stroke: #666; stroke-width: 1; }
.tabs { height: 29px; display: flex; align-items: flex-end; }
.tab {
  height: 26px;
  padding: 0 8px;
  border: 1px solid #b8b5b1;
  border-bottom: 0;
  border-left: 0;
  border-radius: 0 4px 0 0;
  background: linear-gradient(#f0efed, #dfdddb);
}
.tab.active {
  position: relative;
  height: 30px;
  margin-bottom: -1px;
  border-left: 1px solid #b8b5b1;
  border-radius: 4px 4px 0 0;
  background: linear-gradient(#fff, #f7f7f6);
}
.pane {
  flex: 1;
  min-height: 0;
  display: flex;
  flex-direction: column;
  padding: 1px 1px 0;
  border: 1px solid #b3b1ad;
  border-radius: 0 3px 3px 3px;
  background: #f6f6f5;
}
.tree { flex: 0 0 177px; border: 1px solid #b3b1ad; background: #fff; }
.col-head { height: 25px; padding: 3px 4px; border-bottom: 1px solid #a8a5a1; background: linear-gradient(#fff, #efeeec); }
.tree li { display: flex; align-items: center; height: 19px; gap: 6px; }
.tree .lv0 { padding-left: 3px; }
.lv1 { padding-left: 9px; }
.lv2 { padding-left: 29px; }
.off { color: #c4c2c0; }
.twist { width: 8px; height: 8px; flex: none; fill: #666; }
.ti { width: 16px; height: 16px; }
.splitter { flex: 0 0 6px; display: flex; gap: 2px; justify-content: center; align-items: center; }
.splitter i { width: 1px; height: 4px; background: #b9b6b2; }
.props { flex: 1; min-height: 0; padding: 1px; border: 1px solid #b3b1ad; border-radius: 3px 3px 0 0; background: #fff; box-shadow: inset 0 0 0 1px #fff, inset 0 0 0 2px #c4c2be; }
.props table { width: 100%; border-collapse: collapse; }
.props th {
  height: 26px;
  padding: 0 4px;
  border: 1px solid #b3b1ad;
  border-right-color: #d0cecb;
  background: linear-gradient(#fff, #efeeec);
  font-weight: normal;
  text-align: left;
}
.props th:first-child { width: 100px; }
.btabs { flex: 0 0 31px; display: flex; align-items: flex-start; }
.btab { position: relative; width: 48px; height: 29px; }
.btab.active { height: 30px; }
.btab svg { position: absolute; left: 0; top: 0; width: 100%; height: 100%; stroke: #555; stroke-width: 1; }
.btab span { position: relative; }

.handle { flex: 0 0 6px; display: flex; flex-direction: column; align-items: center; justify-content: center; gap: 2px; }
.handle i { width: 4px; height: 1px; background: #c6c4c1; }
.mdi { flex: 1; min-width: 0; display: flex; flex-direction: column; }
.viewport { position: relative; flex: 1; min-height: 0; background: linear-gradient(#333366, #9898ab); border-bottom: 1px solid #b3b1ad; }
.scene { width: 100%; height: 100%; }
.axes { position: absolute; right: 0; bottom: 4px; width: 36px; height: 44px; font: 9px "DejaVu Sans", sans-serif; }
.mtabs { flex: 0 0 32px; display: flex; align-items: flex-start; }
.mtab {
  display: flex;
  align-items: center;
  gap: 10px;
  height: 29px;
  padding: 0 11px 0 7px;
  border: 1px solid #c4c2be;
  border-top: 0;
  border-radius: 0 0 3px 3px;
  background: linear-gradient(#e2e0de, #f0efed);
}
.mtab.active { height: 32px; padding: 0 10px 0 6px; border-color: #b0aeaa; background: linear-gradient(#f6f6f5, #fff); }
.mtab .x { width: 13px; height: 13px; stroke: #5c5c5c; stroke-width: 4; }
.logo { width: 16px; height: 16px; margin-right: -3px; }

.status {
  flex: none;
  height: 30px;
  display: flex;
  justify-content: flex-end;
  align-items: center;
  gap: 11px;
  padding-right: 2px;
  border-top: 1px solid #d6d4d1;
  background: #f2f1f0;
  box-shadow: inset 0 1px #fff;
}
.sizer { width: 12px; height: 12px; align-self: flex-end; stroke: #c9c7c4; stroke-dasharray: 1 2; }
.behind { flex: none; height: 3px; padding-left: 89px; overflow: hidden; line-height: 14px; color: #2e2d2b; }
```
